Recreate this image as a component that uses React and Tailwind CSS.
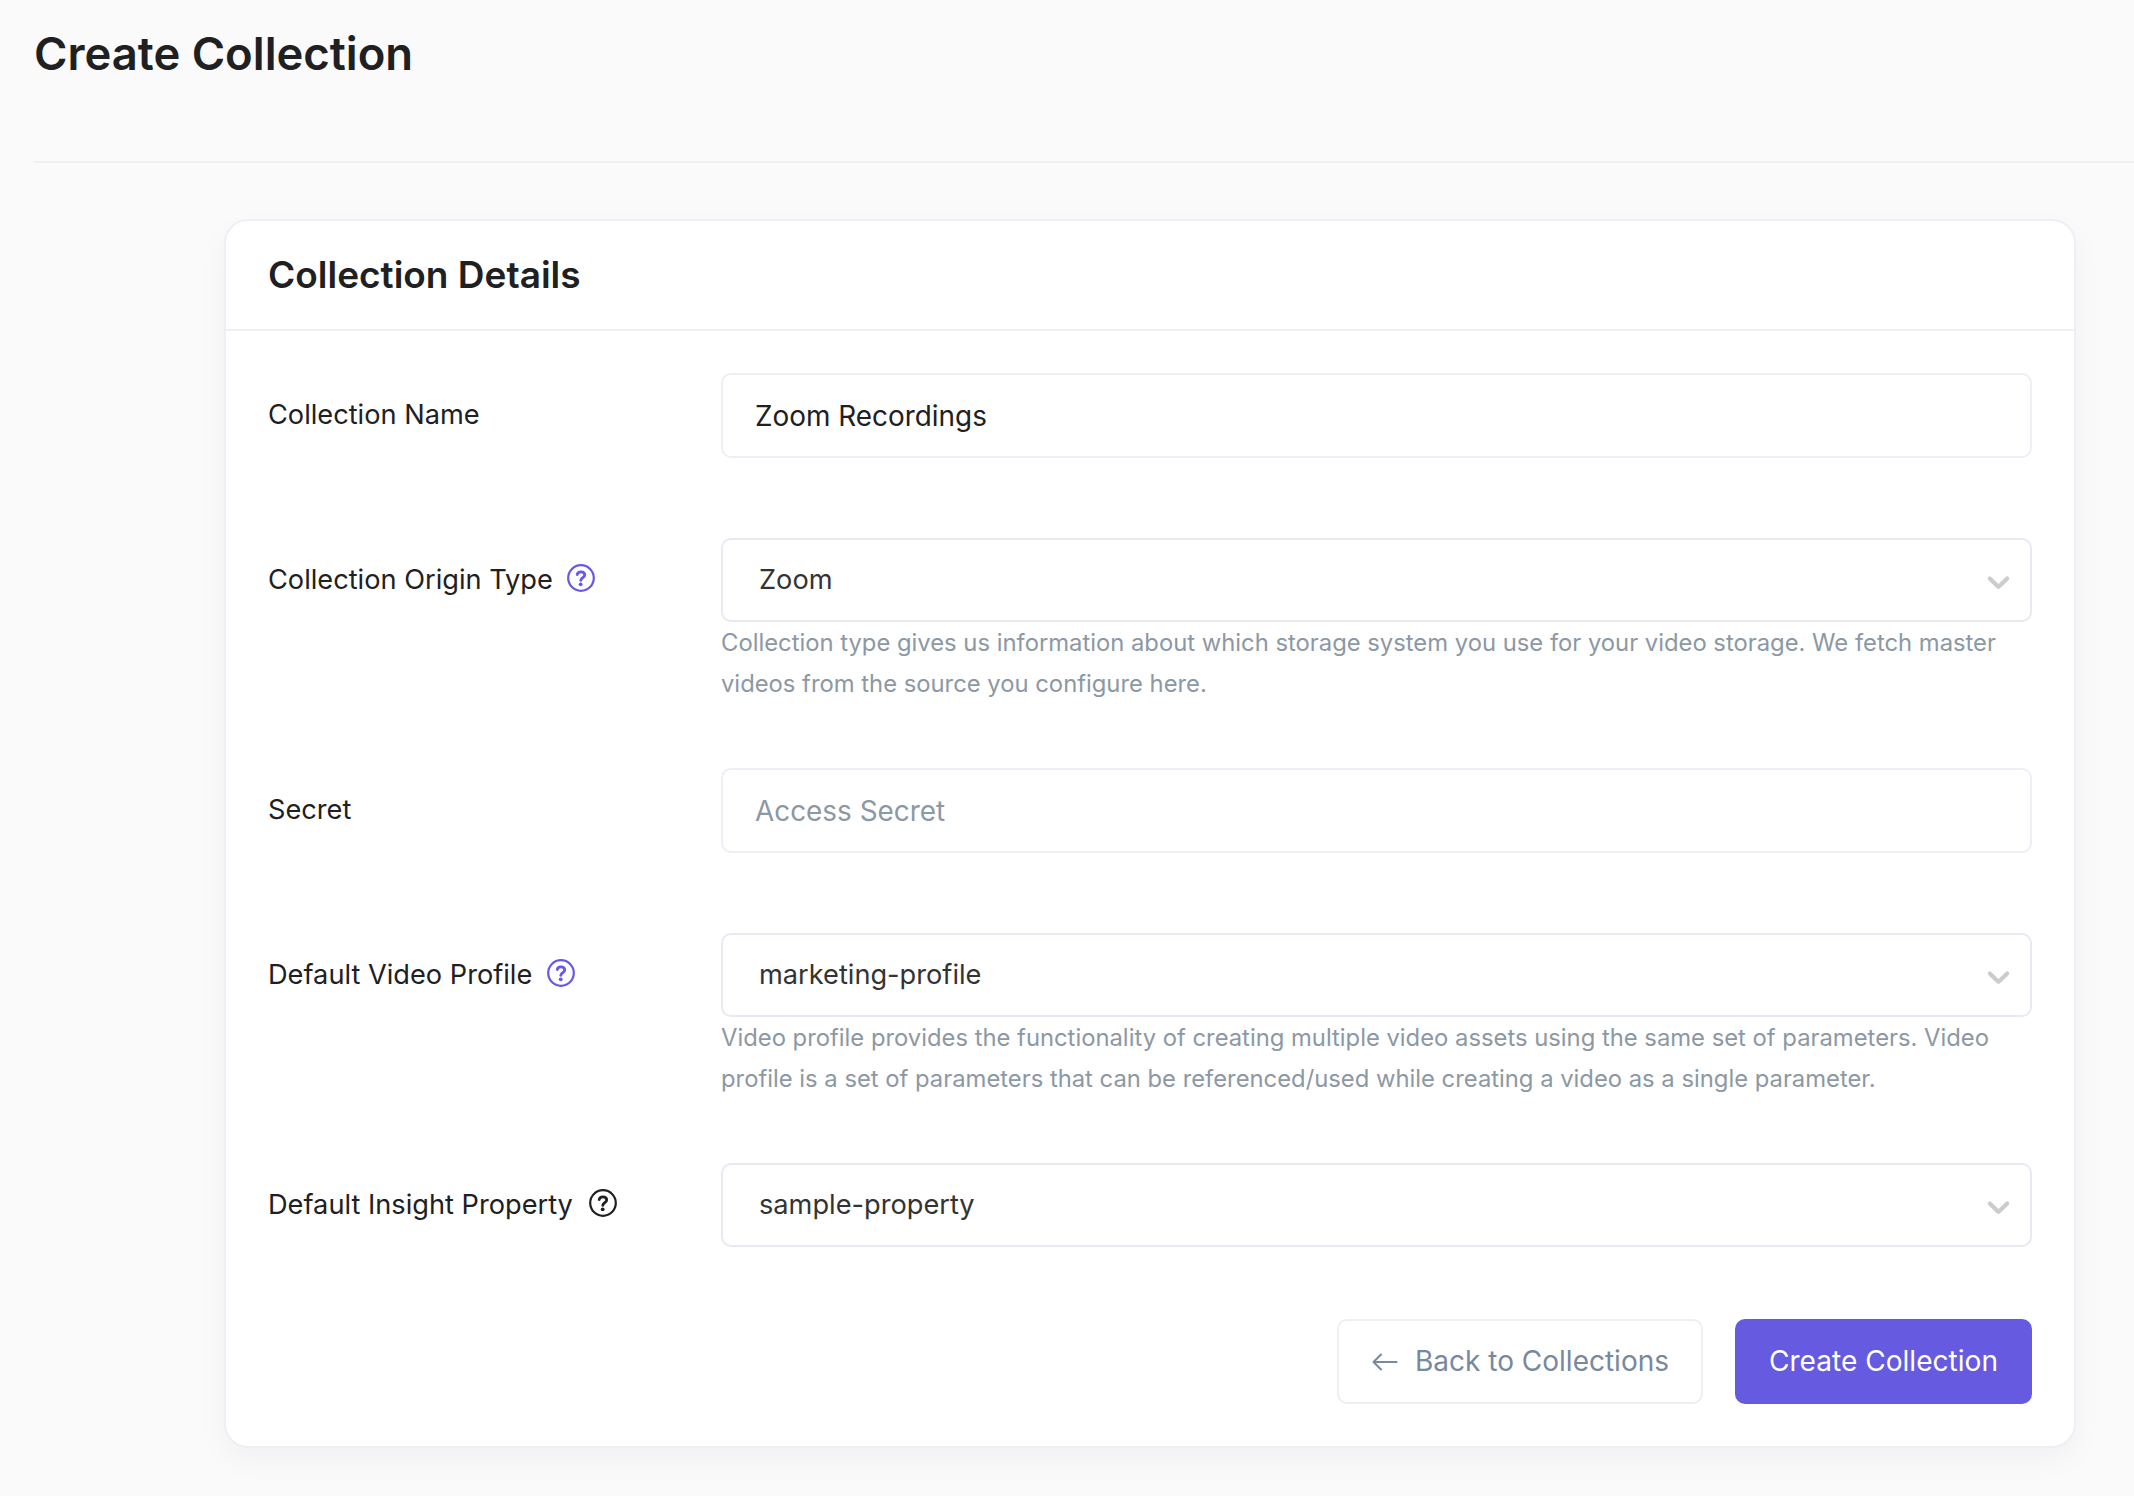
function HelpIcon({ className }) {
  return (
    <svg viewBox="0 0 28 28" className={`mb-1 size-7 shrink-0 ${className}`} fill="none" stroke="currentColor">
      <circle cx="14" cy="14" r="12.8" strokeWidth="2.2" />
      <path
        d="M10.2 10.6C10.5 8.8 12 7.8 13.9 7.8c2.2 0 3.8 1.2 3.8 3.1 0 2.6-3.6 2.8-3.9 5.4"
        strokeWidth="2.8"
        strokeLinecap="round"
      />
      <circle cx="13.7" cy="20.3" r="1.9" fill="currentColor" stroke="none" />
    </svg>
  );
}

function Chevron() {
  return (
    <svg viewBox="0 0 20 20" className="mt-[3px] size-[37px] shrink-0 text-[#cccccc]" fill="currentColor">
      <path d="M4.516 7.548c0.436-0.446 1.043-0.481 1.576 0l3.908 3.747 3.908-3.747c0.533-0.481 1.141-0.446 1.574 0 0.436 0.445 0.408 1.197 0 1.615-0.406 0.418-4.695 4.502-4.695 4.502-0.217 0.223-0.502 0.335-0.787 0.335s-0.57-0.112-0.789-0.335c0 0-4.287-4.084-4.695-4.502s-0.436-1.17 0-1.615z" />
    </svg>
  );
}

function ArrowLeft() {
  return (
    <svg
      viewBox="0 0 26 18"
      className="h-[18px] w-[26px] shrink-0"
      fill="none"
      stroke="currentColor"
      strokeWidth="2.1"
      strokeLinecap="round"
      strokeLinejoin="round"
    >
      <path d="M24.6 9H1.5M9 1.6 1.5 9 9 16.4" />
    </svg>
  );
}

function Row({ label, icon, className, children }) {
  return (
    <div className={`flex ${className}`}>
      <div className="flex h-[84px] w-[453px] shrink-0 items-center gap-[15px] text-[27.2px] leading-[84px] text-[#1e2022]">
        <span>{label}</span>
        {icon}
      </div>
      <div className="min-w-0 flex-1">{children}</div>
    </div>
  );
}

function Input({ value, placeholder }) {
  return (
    <input
      type="text"
      defaultValue={value}
      placeholder={placeholder}
      className="block h-[85px] w-full rounded-[10px] border-2 border-[#efeef7] bg-white px-8 text-[27.9px] text-[#1e2022] outline-none placeholder:text-[#8c98a4]"
    />
  );
}

function Select({ value, help }) {
  return (
    <>
      <div className="flex h-[84px] items-center justify-between rounded-[10px] border-2 border-[#e7eaf3] bg-white pr-[13.5px] pl-9">
        <span className="text-[27.2px] leading-[80px] text-[#333333]">{value}</span>
        <Chevron />
      </div>
      {help && (
        <p className="text-[23.8px] leading-[41px] whitespace-nowrap text-[#8c98a4]">
          {help[0]}
          <br />
          {help[1]}
        </p>
      )}
    </>
  );
}

export default function App() {
  return (
    <div className="h-[1496px] overflow-hidden bg-[#fafafa] font-['Inter',sans-serif]">
      <header className="ml-[34px] h-[163px] border-b-2 border-[#efeff5] pt-[27px]">
        <h1 className="text-[45.4px] leading-[54px] font-semibold text-[#1e2022]">Create Collection</h1>
      </header>

      <main className="mt-14 mr-[58px] ml-[224px] rounded-3xl border-2 border-[#efeef7] bg-white shadow-[0_12px_30px_rgba(0,0,0,0.04)]">
        <div className="h-[110px] border-b-2 border-[#efeef7] px-[42px]">
          <h2 className="text-[37px] leading-[108px] font-semibold text-[#1e2022]">Collection Details</h2>
        </div>

        <form className="p-[42px]">
          <Row label="Collection Name" className="h-[165px]">
            <Input value="Zoom Recordings" />
          </Row>
          <Row
            label="Collection Origin Type"
            icon={<HelpIcon className="-ml-px text-[#6658e8]" />}
            className="h-[230px]"
          >
            <Select
              value="Zoom"
              help={[
                "Collection type gives us information about which storage system you use for your video storage. We fetch master",
                "videos from the source you configure here.",
              ]}
            />
          </Row>
          <Row label="Secret" className="h-[165px]">
            <Input placeholder="Access Secret" />
          </Row>
          <Row
            label="Default Video Profile"
            icon={<HelpIcon className="text-[#6658e8]" />}
            className="h-[230px]"
          >
            <Select
              value="marketing-profile"
              help={[
                "Video profile provides the functionality of creating multiple video assets using the same set of parameters. Video",
                "profile is a set of parameters that can be referenced/used while creating a video as a single parameter.",
              ]}
            />
          </Row>
          <Row
            label="Default Insight Property"
            icon={<HelpIcon className="ml-px text-[#1e2022]" />}
            className="h-[156px]"
          >
            <Select value="sample-property" />
          </Row>

          <div className="flex justify-end gap-8">
            <button
              type="button"
              className="flex h-[85px] w-[366px] items-center gap-[17px] rounded-[10px] border-2 border-[#efeef7] bg-white pl-[33px] text-[28px] leading-[34px] whitespace-nowrap text-[#77889f]"
            >
              <ArrowLeft />
              <span className="pb-px">Back to Collections</span>
            </button>
            <button
              type="button"
              className="h-[85px] w-[297px] rounded-[10px] bg-[#655ae0] pb-px text-[28.1px] leading-[34px] whitespace-nowrap text-white"
            >
              Create Collection
            </button>
          </div>
        </form>
      </main>
    </div>
  );
}
